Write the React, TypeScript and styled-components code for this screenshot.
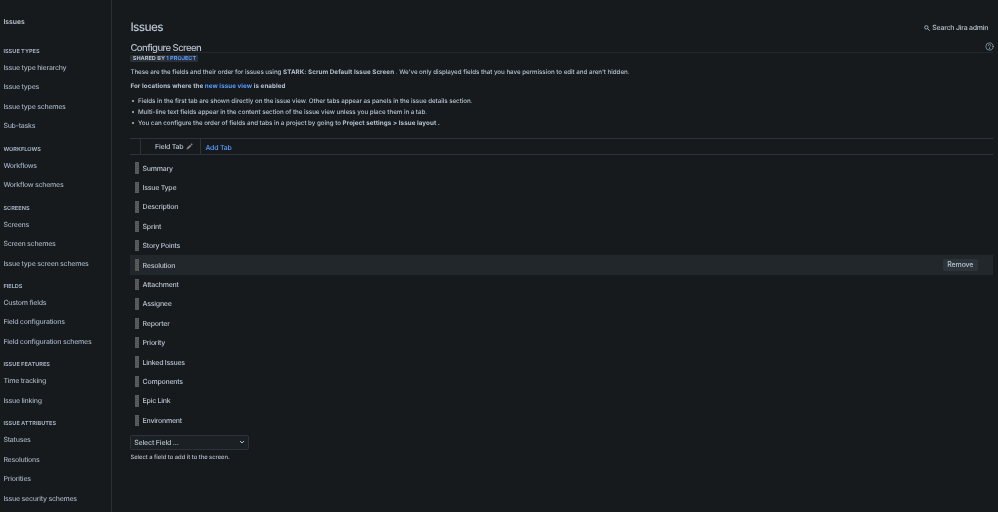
import React from "react";
import styled, { createGlobalStyle } from "styled-components";

const Global = createGlobalStyle`
  * { box-sizing: border-box; }
  body {
    margin: 0;
    background: #161a1d;
    color: #b6c2cf;
    font-family: Inter, "Liberation Sans", sans-serif;
    font-size: 7px;
    text-rendering: geometricPrecision;
    -webkit-font-smoothing: antialiased;
    overflow: hidden;
  }
  b { font-weight: 650; letter-spacing: 0.08px; }
`;

const Page = styled.div`
  display: flex;
  width: 998px;
  height: 512px;
  overflow: hidden;
  will-change: transform;
`;

const Sidebar = styled.nav`
  flex: 0 0 112px;
  border-right: 1px solid #2a2f36;
  padding: 14.6px 0 0 3.4px;
  white-space: nowrap;
`;

const SidebarTitle = styled.div`
  height: 23.3px;
  line-height: 14px;
  font-size: 6.8px;
  font-weight: 600;
`;

const GroupTitle = styled.div`
  height: 20.05px;
  padding-top: 8.9px;
  line-height: 10px;
  font-size: 5.6px;
  font-weight: 700;
  color: #9fadbc;
`;

const NavItem = styled.a`
  display: block;
  height: 19.45px;
  line-height: 19.45px;
  font-size: 7px;
  font-weight: 450;
  letter-spacing: -0.25px;
  color: #9fadbc;
`;

const Main = styled.main`
  flex: 1;
  min-width: 0;
  padding: 19px 4.7px 0 18.4px;
`;

const TopBar = styled.header`
  display: flex;
  justify-content: space-between;
  height: 20px;
`;

const PageTitle = styled.h1`
  margin: 0;
  font-size: 11.8px;
  letter-spacing: -0.6px;
  line-height: 16px;
  font-weight: 500;
`;

const AdminSearch = styled.div`
  display: flex;
  align-items: center;
  gap: 2.4px;
  height: 17px;
  margin-right: 5px;
  font-size: 7px;
  font-weight: 450;
  letter-spacing: -0.24px;
`;

const SectionBar = styled.div`
  display: flex;
  justify-content: space-between;
  height: 14px;
  border-bottom: 1px solid #22272b;
`;

const SectionTitle = styled.h2`
  margin: 0;
  font-size: 9.5px;
  letter-spacing: -0.55px;
  line-height: 19.4px;
  font-weight: 500;
`;

const HelpIcon = styled.svg`
  width: 9px;
  height: 9px;
  margin: 3px -0.6px 0 0;
`;

const Shared = styled.div`
  width: 67.5px;
  height: 7.6px;
  margin-top: 1.6px;
  padding-left: 2.4px;
  border-radius: 1px;
  background: #282f36;
  font-size: 5.6px;
  line-height: 8px;
  font-weight: 700;
  white-space: nowrap;
`;

const Link = styled.a`
  color: #579dff;
`;

const Text = styled.p<{ $strong?: boolean }>`
  margin: 0;
  font-size: 6.22px;
  line-height: 14.8px;
  font-weight: ${(p) => (p.$strong ? 650 : 450)};
  letter-spacing: ${(p) => (p.$strong ? "0.08px" : "-0.035px")};
`;

const Intro = styled.div`
  padding-top: 2.4px;
`;

const Notes = styled.ul`
  margin: 1.8px 0 0;
  padding: 0 0 0 7.6px;
  list-style: none;
  font-size: 6.22px;
  font-weight: 450;
  letter-spacing: -0.035px;
  line-height: 11px;
`;

const Note = styled.li`
  display: flex;
  align-items: center;
  white-space: pre;

  &::before {
    content: "";
    width: 2px;
    height: 2px;
    margin: 0 3.6px 0 -5.6px;
    border-radius: 50%;
    background: #b6c2cf;
  }
`;

const Tabs = styled.div`
  display: flex;
  height: 17px;
  margin-top: 8.8px;
  padding-left: 9.5px;
  border-top: 1px solid #2c333a;
  border-bottom: 1px solid #2c333a;
  font-weight: 450;
  letter-spacing: -0.22px;
`;

const ActiveTab = styled.div`
  display: flex;
  gap: 2.6px;
  width: 61px;
  padding-left: 14.2px;
  border-left: 1px solid #2c333a;
  border-right: 1px solid #2c333a;
  line-height: 15.8px;
`;

const PencilIcon = styled.svg`
  width: 7px;
  height: 7px;
  margin-top: 3.8px;
`;

const AddTab = styled.a`
  padding-left: 4.5px;
  color: #579dff;
  line-height: 17px;
`;

const FieldList = styled.div`
  padding-top: 3.7px;
`;

const Field = styled.div<{ $active?: boolean }>`
  display: flex;
  align-items: center;
  height: 19.4px;
  padding-left: 4.3px;
  padding-right: 15.5px;
  background: ${(p) => (p.$active ? "#22272b" : "transparent")};
  font-weight: 450;
  letter-spacing: -0.25px;
`;

const Grip = styled.span`
  width: 4.5px;
  height: 11.4px;
  margin-right: 3.4px;
  background: repeating-linear-gradient(#5b5d5f 0 1px, #515355 1px 2px);
`;

const RemoveButton = styled.button`
  width: 35px;
  height: 12px;
  margin-left: auto;
  padding: 0;
  border: 0;
  border-radius: 1.5px;
  background: #2c333a;
  color: #b6c2cf;
  font: inherit;
  letter-spacing: -0.15px;
  line-height: 12px;
`;

const Select = styled.div`
  display: flex;
  align-items: center;
  justify-content: space-between;
  width: 118.5px;
  height: 15.5px;
  margin-top: 4.8px;
  padding: 0 2.5px 0 2.8px;
  border: 1px solid #2c333a;
  border-radius: 1.5px;
  background: #1b2024;
  font-weight: 450;
  letter-spacing: -0.16px;
`;

const Hint = styled.div`
  font-size: 5.85px;
  font-weight: 450;
  letter-spacing: -0.02px;
  line-height: 15px;
`;

const groups = [
  { title: "ISSUE TYPES", items: ["Issue type hierarchy", "Issue types", "Issue type schemes", "Sub-tasks"] },
  { title: "WORKFLOWS", items: ["Workflows", "Workflow schemes"] },
  { title: "SCREENS", items: ["Screens", "Screen schemes", "Issue type screen schemes"] },
  { title: "FIELDS", items: ["Custom fields", "Field configurations", "Field configuration schemes"] },
  { title: "ISSUE FEATURES", items: ["Time tracking", "Issue linking"] },
  { title: "ISSUE ATTRIBUTES", items: ["Statuses", "Resolutions", "Priorities", "Issue security schemes"] },
];

const fields = [
  "Summary", "Issue Type", "Description", "Sprint", "Story Points", "Resolution", "Attachment",
  "Assignee", "Reporter", "Priority", "Linked Issues", "Components", "Epic Link", "Environment",
];

export default function App() {
  return (
    <>
      <Global />
      <Page>
        <Sidebar>
          <SidebarTitle>Issues</SidebarTitle>
          {groups.map((g) => (
            <React.Fragment key={g.title}>
              <GroupTitle>{g.title}</GroupTitle>
              {g.items.map((i) => (
                <NavItem key={i}>{i}</NavItem>
              ))}
            </React.Fragment>
          ))}
        </Sidebar>
        <Main>
          <TopBar>
            <PageTitle>Issues</PageTitle>
            <AdminSearch>
              <svg width="6" height="6" viewBox="0 0 12 12" fill="none" stroke="#b6c2cf" strokeWidth="1.7">
                <circle cx="4.7" cy="4.7" r="3.4" />
                <path d="M7.4 7.4 L11 11" strokeLinecap="round" />
              </svg>
              Search Jira admin
            </AdminSearch>
          </TopBar>
          <SectionBar>
            <SectionTitle>Configure Screen</SectionTitle>
            <HelpIcon viewBox="0 0 18 18" fill="none" stroke="#8696a7" strokeWidth="1.7" strokeLinecap="round">
              <circle cx="9" cy="9" r="7.3" />
              <path d="M6.5 7.2 C6.5 3.8 11.5 3.8 11.5 7 C11.5 8.8 9 8.7 9 10.8" />
              <circle cx="9" cy="13.2" r="0.4" />
            </HelpIcon>
          </SectionBar>
          <Shared>
            SHARED BY <Link>1 PROJECT</Link>
          </Shared>
          <Intro>
            <Text>
              These are the fields and their order for issues using <b>STARK: Scrum Default Issue Screen</b> . We've only
              displayed fields that you have permission to edit and aren't hidden.
            </Text>
            <Text $strong>
              For locations where the <Link>new issue view</Link> is enabled
            </Text>
          </Intro>
          <Notes>
            <Note>Fields in the first tab are shown directly on the issue view. Other tabs appear as panels in the issue details section.</Note>
            <Note>Multi-line text fields appear in the content section of the issue view unless you place them in a tab.</Note>
            <Note>
              {"You can configure the order of fields and tabs in a project by going to "}
              <b>{"Project settings > Issue layout"}</b>
              <b>{" ."}</b>
            </Note>
          </Notes>
          <Tabs>
            <ActiveTab>
              Field Tab
              <PencilIcon viewBox="0 0 14 14" fill="#85888b">
                <path d="M1 13 L2 9.5 L8.2 3.3 L10.8 5.9 L4.5 12 Z M9 2.5 L10.4 1.1 Q11.2 0.5 12 1.2 L12.9 2.1 Q13.5 2.8 12.9 3.6 L11.6 5 Z" />
              </PencilIcon>
            </ActiveTab>
            <AddTab>Add Tab</AddTab>
          </Tabs>
          <FieldList>
            {fields.map((f) => (
              <Field key={f} $active={f === "Resolution"}>
                <Grip />
                {f}
                {f === "Resolution" && <RemoveButton>Remove</RemoveButton>}
              </Field>
            ))}
          </FieldList>
          <Select>
            Select Field ...
            <svg width="6" height="6" viewBox="0 0 12 12" fill="none" stroke="#b6c2cf" strokeWidth="2" strokeLinecap="round" strokeLinejoin="round">
              <path d="M2.5 4.5 L6 8 L9.5 4.5" />
            </svg>
          </Select>
          <Hint>Select a field to add it to the screen.</Hint>
        </Main>
      </Page>
    </>
  );
}
